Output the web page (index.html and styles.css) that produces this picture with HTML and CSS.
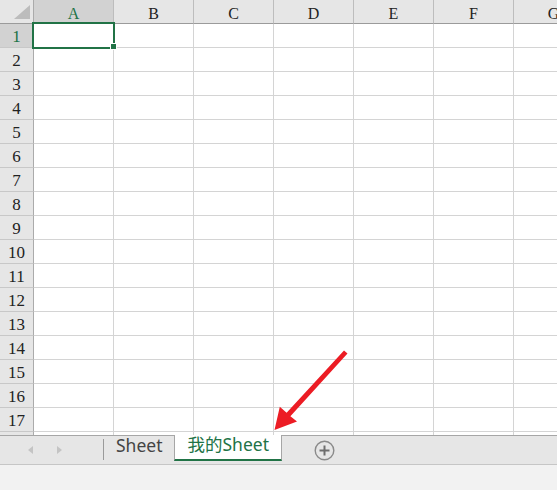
FILE: index.html
```html
<!DOCTYPE html>
<html lang="zh">
<head>
<meta charset="utf-8">
<title>Sheet</title>
<link rel="stylesheet" href="styles.css">
</head>
<body>
<div class="app">
  <div class="sheet">
    <div class="row head">
      <div class="corner"><span class="tri"></span></div>
      <div class="ch sel">A</div><div class="ch">B</div><div class="ch">C</div><div class="ch">D</div><div class="ch">E</div><div class="ch">F</div><div class="ch">G</div>
    </div>
    <div class="row"><div class="rh sel">1</div><div class="cell active"><span class="handle"></span></div><div class="cell"></div><div class="cell"></div><div class="cell"></div><div class="cell"></div><div class="cell"></div><div class="cell"></div></div>
    <div class="row"><div class="rh">2</div><div class="cell"></div><div class="cell"></div><div class="cell"></div><div class="cell"></div><div class="cell"></div><div class="cell"></div><div class="cell"></div></div>
    <div class="row"><div class="rh">3</div><div class="cell"></div><div class="cell"></div><div class="cell"></div><div class="cell"></div><div class="cell"></div><div class="cell"></div><div class="cell"></div></div>
    <div class="row"><div class="rh">4</div><div class="cell"></div><div class="cell"></div><div class="cell"></div><div class="cell"></div><div class="cell"></div><div class="cell"></div><div class="cell"></div></div>
    <div class="row"><div class="rh">5</div><div class="cell"></div><div class="cell"></div><div class="cell"></div><div class="cell"></div><div class="cell"></div><div class="cell"></div><div class="cell"></div></div>
    <div class="row"><div class="rh">6</div><div class="cell"></div><div class="cell"></div><div class="cell"></div><div class="cell"></div><div class="cell"></div><div class="cell"></div><div class="cell"></div></div>
    <div class="row"><div class="rh">7</div><div class="cell"></div><div class="cell"></div><div class="cell"></div><div class="cell"></div><div class="cell"></div><div class="cell"></div><div class="cell"></div></div>
    <div class="row"><div class="rh">8</div><div class="cell"></div><div class="cell"></div><div class="cell"></div><div class="cell"></div><div class="cell"></div><div class="cell"></div><div class="cell"></div></div>
    <div class="row"><div class="rh">9</div><div class="cell"></div><div class="cell"></div><div class="cell"></div><div class="cell"></div><div class="cell"></div><div class="cell"></div><div class="cell"></div></div>
    <div class="row"><div class="rh">10</div><div class="cell"></div><div class="cell"></div><div class="cell"></div><div class="cell"></div><div class="cell"></div><div class="cell"></div><div class="cell"></div></div>
    <div class="row"><div class="rh">11</div><div class="cell"></div><div class="cell"></div><div class="cell"></div><div class="cell"></div><div class="cell"></div><div class="cell"></div><div class="cell"></div></div>
    <div class="row"><div class="rh">12</div><div class="cell"></div><div class="cell"></div><div class="cell"></div><div class="cell"></div><div class="cell"></div><div class="cell"></div><div class="cell"></div></div>
    <div class="row"><div class="rh">13</div><div class="cell"></div><div class="cell"></div><div class="cell"></div><div class="cell"></div><div class="cell"></div><div class="cell"></div><div class="cell"></div></div>
    <div class="row"><div class="rh">14</div><div class="cell"></div><div class="cell"></div><div class="cell"></div><div class="cell"></div><div class="cell"></div><div class="cell"></div><div class="cell"></div></div>
    <div class="row"><div class="rh">15</div><div class="cell"></div><div class="cell"></div><div class="cell"></div><div class="cell"></div><div class="cell"></div><div class="cell"></div><div class="cell"></div></div>
    <div class="row"><div class="rh">16</div><div class="cell"></div><div class="cell"></div><div class="cell"></div><div class="cell"></div><div class="cell"></div><div class="cell"></div><div class="cell"></div></div>
    <div class="row"><div class="rh">17</div><div class="cell"></div><div class="cell"></div><div class="cell"></div><div class="cell"></div><div class="cell"></div><div class="cell"></div><div class="cell"></div></div>
    <div class="row"><div class="rh"></div><div class="cell"></div><div class="cell"></div><div class="cell"></div><div class="cell"></div><div class="cell"></div><div class="cell"></div><div class="cell"></div></div>
  </div>
  <div class="tabbar">
    <div class="nav">
      <span class="arrow left"></span>
      <span class="arrow right"></span>
    </div>
    <span class="sep"></span>
    <div class="tab">Sheet</div>
    <div class="tab active">我的Sheet</div>
    <div class="add">
      <svg width="21" height="21" viewBox="0 0 21 21">
        <circle cx="10.5" cy="10.5" r="9.3" fill="none" stroke="#8a8a8a" stroke-width="1.4"/>
        <path d="M10.5 5.5v10M5.5 10.5h10" stroke="#6e6e6e" stroke-width="2" fill="none"/>
      </svg>
    </div>
  </div>
  <div class="status"></div>
  <svg class="callout" width="557" height="490" viewBox="0 0 557 490">
    <polygon points="344,350.5 347.5,353.5 290.4,416.2 297,421.5 274.5,430 279.8,406.8 286.6,412.8" fill="#ec1c24"/>
  </svg>
</div>
</body>
</html>
```
FILE: styles.css
```css
html, body {
  margin: 0;
  padding: 0;
  background: #ffffff;
}
.app {
  position: relative;
  width: 557px;
  height: 490px;
  overflow: hidden;
}
.sheet {
  height: 435px;
  overflow: hidden;
}
.row {
  display: flex;
  height: 24px;
}
.cell {
  flex: none;
  width: 80px;
  height: 24px;
  box-sizing: border-box;
  border-right: 1px solid #d4d4d4;
  border-bottom: 1px solid #d4d4d4;
  background: #fff;
}
.cell.active {
  position: relative;
}
.cell.active::after {
  content: "";
  position: absolute;
  inset: -2px;
  border: 2px solid #217346;
  z-index: 2;
}
.handle {
  position: absolute;
  left: 76px;
  top: 19px;
  width: 5px;
  height: 5px;
  background: #217346;
  border: 1px solid #fff;
  z-index: 3;
}
.head .ch,
.corner {
  flex: none;
  height: 24px;
  box-sizing: border-box;
  background: #e6e6e6;
  border-bottom: 1px solid #9b9b9b;
}
.head .ch {
  width: 80px;
  border-right: 1px solid #bdbdbd;
  text-align: center;
  font-family: "Liberation Serif", serif;
  font-size: 16px;
  line-height: 19px;
  padding-top: 4px;
  color: #222;
}
.head .ch.sel,
.rh.sel {
  background: #d2d2d2;
  color: #217346;
}
.corner {
  width: 34px;
  border-right: 1px solid #ababab;
  position: relative;
}
.tri {
  position: absolute;
  left: 14px;
  top: 5px;
  width: 0;
  height: 0;
  border-style: solid;
  border-width: 0 0 14px 16px;
  border-color: transparent transparent #bcbcbc transparent;
}
.rh {
  flex: none;
  width: 34px;
  height: 24px;
  box-sizing: border-box;
  background: #e6e6e6;
  border-right: 1px solid #ababab;
  border-bottom: 1px solid #c8c8c8;
  text-align: center;
  font-family: "Liberation Serif", serif;
  font-size: 17px;
  line-height: 20px;
  padding-top: 3px;
  color: #222;
}
.tabbar {
  display: flex;
  align-items: flex-start;
  height: 30px;
  box-sizing: border-box;
  background: #e6e6e6;
  border-top: 1px solid #a6a6a6;
  border-bottom: 1px solid #c6c6c6;
}
.nav {
  flex: none;
  width: 103px;
  height: 28px;
  position: relative;
}
.arrow {
  position: absolute;
  top: 10px;
  width: 0;
  height: 0;
  border-style: solid;
}
.arrow.left {
  left: 28px;
  border-width: 4px 5px 4px 0;
  border-color: transparent #c4c4c4 transparent transparent;
}
.arrow.right {
  left: 57px;
  border-width: 4px 0 4px 5px;
  border-color: transparent transparent transparent #c4c4c4;
}
.sep {
  flex: none;
  width: 1px;
  height: 21px;
  margin-top: 3px;
  background: #9a9a9a;
}
.tab {
  flex: none;
  padding: 0 12px;
  font-family: "Noto Sans", "Noto Sans CJK SC", sans-serif;
  font-size: 17.5px;
  line-height: 18px;
  color: #444;
}
.tab.active {
  margin-top: -1px;
  height: 24px;
  background: #fff;
  color: #217346;
  border-left: 1px solid #a6a6a6;
  border-right: 1px solid #a6a6a6;
  border-bottom: 2px solid #217346;
}
.add {
  flex: none;
  margin-left: 32px;
  margin-top: 4px;
  width: 21px;
  height: 21px;
}
.add svg {
  display: block;
}
.status {
  height: 25px;
  background: #f2f2f2;
}
.callout {
  position: absolute;
  left: 0;
  top: 0;
  pointer-events: none;
}
```
